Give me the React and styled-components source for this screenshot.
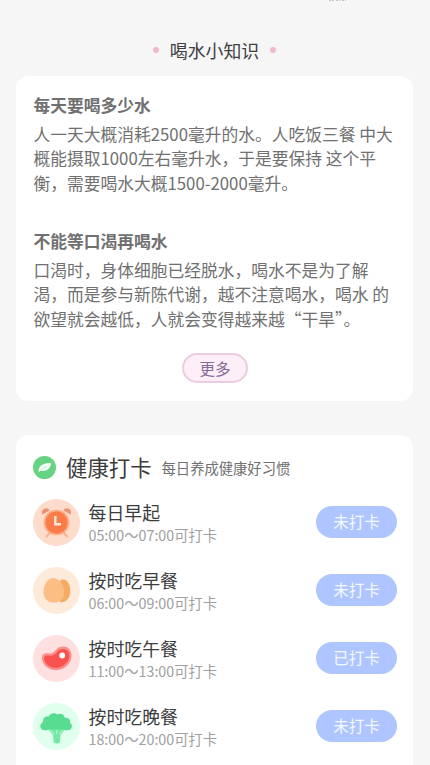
import React from 'react';
import styled, {createGlobalStyle} from 'styled-components';

const tips = [
  {
    id: 1,
    title: '每天要喝多少水',
    lines: ['人一天大概消耗2500毫升的水。人吃饭三餐 中大', '概能摄取1000左右毫升水，于是要保持 这个平', '衡，需要喝水大概1500-2000毫升。'],
  },
  {
    id: 2,
    title: '不能等口渴再喝水',
    lines: ['口渴时，身体细胞已经脱水，喝水不是为了解', '渴，而是参与新陈代谢，越不注意喝水，喝水 的', '欲望就会越低，人就会变得越来越“干旱”。'],
  },
];

const ClockIcon = () => (
  <svg viewBox="0 0 47 47">
    <path d="M17 33.500l-3.500 4M30.500 33.500l3.500 4" stroke="#f5b294" strokeWidth="2" strokeLinecap="round" />
    <path d="M9.500 15.500c-1.500-3 .5-6.300 3.500-6.300 2 0 3.200 1 3.600 2.200z" fill="#ea9374" />
    <path d="M37.500 15.500c1.500-3-.5-6.300-3.500-6.300-2 0-3.200 1-3.600 2.200z" fill="#ea9374" />
    <circle cx="23.500" cy="23.500" r="12.800" fill="#fdaa84" />
    <circle cx="23.500" cy="23.500" r="11" fill="#fb7c49" />
    <path d="M22.300 17v8.200h5.700" fill="none" stroke="#ffe9dc" strokeWidth="2.400" />
  </svg>
);

const EggIcon = () => (
  <svg viewBox="0 0 47 47">
    <path d="M27 13.500c5-3.200 10.300 2 10.300 10.500 0 7-4 11.500-10.300 11.500z" fill="#f6ab62" />
    <path d="M10.500 25c0-7 4-14 9.800-14 5 0 10.700 6.500 10.700 14 0 6.500-4 10.800-10.200 10.800S10.500 31.500 10.500 25z" fill="#fdbe85" />
  </svg>
);

const MeatIcon = () => (
  <svg viewBox="0 0 47 47">
    <path d="M9 24c-.8-4 2-6.500 6-5.700 4 .7 5.500-.8 8-3.600 3.500-4 11-4.500 14 .3 3.500 5.300 1 14-6 18-8.500 5-20.500 1-22-9z" fill="#fb8f8b" />
    <path d="M11 24.200c-.3-3 1.500-4.200 4-3.700 4.500.8 7-.8 9.500-4 3-3.500 8.500-3.500 10.700 0 2.800 4.500.3 11.200-5.500 14.500-7.200 4.200-17.300.7-18.700-6.800z" fill="#f9524f" />
    <circle cx="29.200" cy="20.500" r="2.900" fill="#fff" />
  </svg>
);

const BroccoliIcon = () => (
  <svg viewBox="0 0 47 47">
    <path d="M13.500 24.500h20l-6 7.500-.7 7.500c-1.400 1.300-4.600 1.300-6 0L20 32z" fill="#72e8a3" />
    <path d="M17.500 27l4 4.500M29.800 27l-4 4.500M23.700 27v4" stroke="#c4f7d8" strokeWidth="1" />
    <path d="M12 27.300c-5.300.2-6.300-6.500-2-8-.5-4.300 2.500-6.300 5.500-5.600C17.300 10 22 9.300 24 11.500c3.700-2 7.300 0 7.800 3.200 4-.5 6 2 5.200 5 3.500 2 2 7.900-2.700 7.600-2 .3-3-.5-4-1.200-1.500 1-3.200 1-4.700 0-1.500 1-3 1-4.500 0-1.500 1-3.200 1-4.600 0-1.200.9-2.700 1.200-4.500 1.200z" fill="#58dc92" />
  </svg>
);

const habits = [
  {id: 1, name: '每日早起', time: '05:00～07:00可打卡', status: '未打卡', color: '#fddccc', icon: <ClockIcon />},
  {id: 2, name: '按时吃早餐', time: '06:00～09:00可打卡', status: '未打卡', color: '#feeadb', icon: <EggIcon />},
  {id: 3, name: '按时吃午餐', time: '11:00～13:00可打卡', status: '已打卡', color: '#ffe0e0', icon: <MeatIcon />},
  {id: 4, name: '按时吃晚餐', time: '18:00～20:00可打卡', status: '未打卡', color: '#e0ffec', icon: <BroccoliIcon />},
];

const App = () => {
  return (
    <PageStyled>
      <GlobalStyle />
      <CutOff viewBox="0 0 20 2">
        <path d="M1 .5h5M8 .5h4M14 .5h4" stroke="#c4c4c4" strokeWidth="1" strokeDasharray="2 1" />
      </CutOff>
      <SectionTitle>
        <Dot />
        <h1>喝水小知识</h1>
        <Dot />
      </SectionTitle>

      <TipsCard>
        {tips.map((tip) => (
          <Tip key={tip.id}>
            <h2>{tip.title}</h2>
            {tip.lines.map((line) => <p key={line}>{line}</p>)}
          </Tip>
        ))}
        <MoreButton>更多</MoreButton>
      </TipsCard>

      <HabitsCard>
        <HabitsHeader>
          <svg viewBox="0 0 23 23">
            <circle cx="11.500" cy="11.500" r="11.500" fill="#66d282" />
            <path d="M5.500 15C6 9.500 10 7 18 7c-.3 5.500-4.200 8.700-10.500 7.800L5.800 16z" fill="#f2fff5" />
            <path d="M7.500 14l6.500-3.700" stroke="#b5ebc2" strokeWidth=".7" />
          </svg>
          <h2>健康打卡</h2>
          <span>每日养成健康好习惯</span>
        </HabitsHeader>
        {habits.map((habit) => (
          <HabitRow key={habit.id}>
            <IconCircle $color={habit.color}>{habit.icon}</IconCircle>
            <HabitText>
              <h3>{habit.name}</h3>
              <p>{habit.time}</p>
            </HabitText>
            <StatusButton>{habit.status}</StatusButton>
          </HabitRow>
        ))}
      </HabitsCard>
    </PageStyled>
  )
}

const GlobalStyle = createGlobalStyle`
  * {
    margin: 0;
    padding: 0;
    box-sizing: border-box;
  }

  body {
    background: #f6f6f6;
    overflow: hidden;
  }
`;

const PageStyled = styled.main`
  width: 430px;
  height: 765px;
  overflow: hidden;
  padding: 0 17px 0 16px;
  background: #f6f6f6;
  font-family: 'Noto Sans CJK SC', sans-serif;
  display: flex;
  flex-direction: column;
`;

const CutOff = styled.svg`
  flex: none;
  width: 20px;
  height: 2px;
  margin-left: 312px;
`;

const SectionTitle = styled.header`
  flex: none;
  height: 74px;
  padding-top: 22px;
  display: flex;
  align-items: center;
  justify-content: center;
  gap: 11px;

  h1 {
    font-size: 17.900px;
    line-height: 26px;
    font-weight: 400;
    color: #3f3f44;
  }
`;

const Dot = styled.i`
  width: 6px;
  height: 6px;
  border-radius: 50%;
  background: #efb9cb;
`;

const Card = styled.section`
  flex: none;
  background: #ffffff;
  border-radius: 13px;
`;

const TipsCard = styled(Card)`
  height: 325px;
  padding: 16px 0 0 17.500px;
  display: flex;
  flex-direction: column;
`;

const Tip = styled.article`
  height: 135.700px;
  color: #707070;
  white-space: nowrap;

  h2 {
    font-size: 16.75px;
    line-height: 26px;
    font-weight: 700;
    margin-bottom: 4px;
  }

  p {
    font-size: 16.75px;
    line-height: 24.400px;
  }
`;

const MoreButton = styled.button`
  width: 66px;
  height: 30px;
  margin: -10.400px 0 0 148.500px;
  border: 2px solid #ebcde0;
  border-radius: 15px;
  background: #fdeef7;
  color: #846c98;
  font-family: inherit;
  font-size: 15.500px;
  line-height: 26px;
`;

const HabitsCard = styled(Card)`
  height: 360px;
  margin-top: 34px;
  padding: 14px 16px 0 17px;
`;

const HabitsHeader = styled.div`
  height: 39px;
  display: flex;
  align-items: center;
  padding-bottom: 3px;

  svg {
    width: 23px;
    height: 23px;
  }

  h2 {
    font-size: 21.400px;
    line-height: 32px;
    font-weight: 400;
    color: #3c3c3c;
    margin: 0 10px;
  }

  span {
    font-size: 14.300px;
    color: #707070;
  }
`;

const HabitRow = styled.div`
  height: 68px;
  display: flex;
  align-items: center;
`;

const IconCircle = styled.div`
  width: 47px;
  height: 47px;
  border-radius: 50%;
  background: ${(props) => props.$color};

  svg {
    display: block;
    width: 47px;
    height: 47px;
  }
`;

const HabitText = styled.div`
  flex: 1;
  padding: 1px 0 0 8.500px;

  h3 {
    font-size: 17.900px;
    line-height: 24px;
    font-weight: 400;
    color: #3c3c3c;
  }

  p {
    font-size: 14.300px;
    line-height: 22px;
    color: #a0a0a0;
  }
`;

const StatusButton = styled.button`
  width: 81px;
  height: 32px;
  padding-bottom: 1px;
  border: 0;
  border-radius: 16px;
  background: #afc5ff;
  color: #f5f9ff;
  font-family: inherit;
  font-size: 15.500px;
  line-height: 31px;
`;

export default App
